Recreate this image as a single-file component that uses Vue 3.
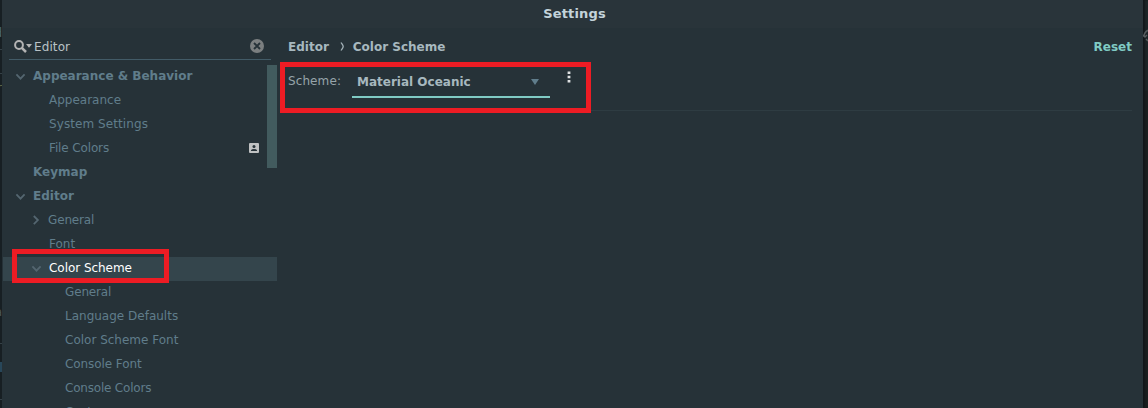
<script setup>
const rows = [
  { label: 'Appearance & Behavior', left: 33, bold: true, arrow: 'down', ax: 15 },
  { label: 'Appearance', left: 49 },
  { label: 'System Settings', left: 49, track: 0.08 },
  { label: 'File Colors', left: 49, track: -0.13, badge: true },
  { label: 'Keymap', left: 33, bold: true },
  { label: 'Editor', left: 33, bold: true, arrow: 'down', ax: 15 },
  { label: 'General', left: 48, track: -0.15, arrow: 'right', ax: 31 },
  { label: 'Font', left: 49 },
  { label: 'Color Scheme', left: 49, track: -0.04, arrow: 'down', ax: 31, selected: true },
  { label: 'General', left: 65, track: -0.15 },
  { label: 'Language Defaults', left: 65 },
  { label: 'Color Scheme Font', left: 65 },
  { label: 'Console Font', left: 65, track: -0.08 },
  { label: 'Console Colors', left: 65, track: -0.2 },
  { label: 'Custom', left: 65 },
]
</script>

<template>
  <div class="screen">
    <div class="backdrop-left">
      <span class="frag f1">d</span>
      <span class="frag f2">r</span>
      <span class="frag f3">a</span>
      <i class="tick t1"></i><i class="tick t2"></i><i class="tick t3"></i><i class="tick t4"></i>
      <i class="mark"></i>
    </div>
    <div class="dialog">
      <header class="title">Settings</header>
      <div class="body">
        <aside class="sidebar">
          <div class="search">
            <svg class="lens" width="19" height="14" viewBox="0 0 19 14">
              <circle cx="5" cy="5" r="3.9" fill="none" stroke="#b4b4b4" stroke-width="2" />
              <path d="M7.8 7.8 L12 12" stroke="#b4b4b4" stroke-width="2.5" />
              <path d="M12 4 H18 L15 7.8 Z" fill="#b4b4b4" />
            </svg>
            <span class="query">Editor</span>
            <svg class="clear" width="14" height="14" viewBox="0 0 14 14">
              <circle cx="7" cy="7" r="7" fill="#7b7f80" />
              <path d="M4 4 L10 10 M10 4 L4 10" stroke="#263238" stroke-width="1.9" />
            </svg>
          </div>
          <div class="tree">
            <div v-for="(r, i) in rows" :key="i" class="row" :class="{ selected: r.selected, bold: r.bold }" :style="{ paddingLeft: r.left - 3 + 'px', letterSpacing: (r.track || 0) + 'px' }">
              <svg v-if="r.arrow" class="arrow" :style="{ left: r.ax - 3 + 'px' }" width="11" height="11" viewBox="0 0 11 11">
                <path :d="r.arrow === 'down' ? 'M1.4 3.4 L5.5 7.6 L9.6 3.4' : 'M2.8 1 L6.9 5.1 L2.8 9.2'" fill="none" stroke="#546670" stroke-width="1.8" />
              </svg>
              <span class="label">{{ r.label }}</span>
              <svg v-if="r.badge" class="badge" width="10" height="10" viewBox="0 0 10 10">
                <rect width="10" height="10" rx="1" fill="#bfc1c2" />
                <circle cx="5" cy="3.5" r="1.5" fill="#263238" />
                <path d="M2 8 V7.2 Q2.6 6 5 6 T8 7.2 V8 Z" fill="#263238" />
              </svg>
            </div>
            <div class="thumb"></div>
          </div>
        </aside>
        <main class="content">
          <div class="crumbs">
            <span class="crumb-a">Editor</span>
            <svg class="sep" width="5" height="9" viewBox="0 0 5 9"><path d="M1 .5 C2 2 3.2 3 3.2 4.5 S2 7 1 8.5" fill="none" stroke="#a3b2b8" stroke-width="1.3" /></svg>
            <span class="crumb-b">Color Scheme</span>
            <span class="reset">Reset</span>
          </div>
          <div class="scheme">
            <span class="caption">Scheme:</span>
            <div class="combo">
              <span>Material Oceanic</span>
              <svg width="8" height="6" viewBox="0 0 8 6"><path d="M0 0 H8 L4 6 Z" fill="#607d8b" /></svg>
            </div>
            <svg class="more" width="4" height="12" viewBox="0 0 4 12"><path d="M.6 .6h2.8v2.4h-2.8z M.6 4.8h2.8v2.4h-2.8z M.6 9h2.8v2.4h-2.8z" fill="#dfe2e3" /></svg>
          </div>
        </main>
      </div>
    </div>
    <div class="backdrop-right">
      <svg width="5" height="14" viewBox="0 0 5 14"><path d="M6 1 C2 2 1 5 1 8 M0 6 L2 8 L4 6 M3 10 L5 12" fill="none" stroke="#555b5e" stroke-width="1.5" /></svg>
    </div>
    <div class="outline outline-scheme"></div>
    <div class="outline outline-tree"></div>
  </div>
</template>

<style>
body { overflow: hidden; background: #263238; }
</style>

<style scoped>
.screen { position: relative; display: flex; width: 1148px; height: 408px; overflow: hidden; font: 12px/24px "DejaVu Sans", sans-serif; color: #607d8b; white-space: nowrap; }
.backdrop-left { position: relative; flex: none; width: 2px; overflow: hidden; background: #171f23; }
.frag { position: absolute; right: 0; line-height: 14px; color: #4b6672; }
.f1 { top: 26px; } .f2 { top: 81px; color: #657452; } .f3 { top: 305px; color: #4b5558; }
.tick { position: absolute; left: 0; width: 2px; height: 1px; background: #354147; }
.t1 { top: 49px; } .t2 { top: 73px; } .t3 { top: 343px; } .t4 { top: 399px; }
.mark { position: absolute; top: 362px; left: 0; width: 2px; height: 10px; background: #28475a; }
.dialog { flex: none; width: 1141px; display: flex; flex-direction: column; background: #263238; }
.title { height: 28px; flex: none; background: #29343a; text-align: center; font-weight: bold; font-size: 13px; letter-spacing: .15px; line-height: 27px; color: #c3d3da; padding-left: 4px; }
.body { display: flex; flex: 1; min-height: 0; }
.sidebar { width: 275px; flex: none; }
.search { display: flex; align-items: center; margin-left: 7px; width: 262px; height: 31px; border-bottom: 1px solid #425b67; }
.lens { margin: 6px 0 0 5px; }
.query { margin: 6px 0 0 1px; letter-spacing: .1px; color: #b9c2c6; }
.clear { margin: 5px 7px 0 auto; }
.tree { position: relative; margin: 5px 0 0 1px; }
.row { position: relative; display: flex; height: 24px; line-height: 23px; }
.bold { font-weight: bold; }
.selected { background: #34454c; color: #fff; }
.arrow { position: absolute; top: 6px; }
.badge { margin: 6px 18px 0 auto; }
.thumb { position: absolute; top: 0; right: 0; width: 10px; height: 103px; background: #425b5e; }
.content { flex: 1; padding: 0 11px 0 11px; }
.crumbs { display: flex; height: 37px; line-height: 39px; font-weight: bold; color: #a7b8bf; }
.sep { margin: 14px 8px 0 11px; }
.reset { margin-left: auto; color: #80cbc4; }
.scheme { display: flex; height: 45px; border-bottom: 1px solid #2e3c42; }
.caption { width: 64px; padding-top: 4px; letter-spacing: .1px; color: #96a4aa; }
.combo { display: flex; align-items: center; justify-content: space-between; width: 198px; height: 33px; box-sizing: border-box; padding: 3px 11px 0 5px; border-bottom: 2px solid #80cbc4; font-weight: bold; color: #a7b8bf; }
.more { margin: 6px 0 0 17px; }
.backdrop-right { flex: 1; padding-top: 27px; background: linear-gradient(#1d2528 0 90px, #1b1f20 91px); box-shadow: inset 2px 0 2px #12171a; }
.outline { position: absolute; box-sizing: border-box; border: 5px solid #ed1c24; }
.outline-scheme { left: 280px; top: 62px; width: 311px; height: 51px; }
.outline-tree { left: 12px; top: 249px; width: 157px; height: 34px; }
</style>
